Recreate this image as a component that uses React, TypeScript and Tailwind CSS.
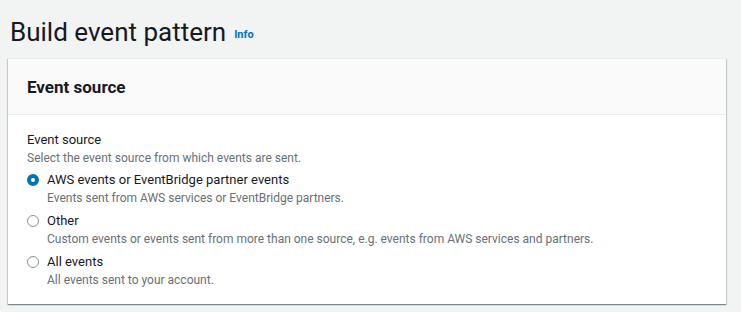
import React from 'react';

const options = [
  {
    label: 'AWS events or EventBridge partner events',
    desc: 'Events sent from AWS services or EventBridge partners.',
    checked: true,
  },
  {
    label: 'Other',
    desc: 'Custom events or events sent from more than one source, e.g. events from AWS services and partners.',
    checked: false,
  },
  {
    label: 'All events',
    desc: 'All events sent to your account.',
    checked: false,
  },
];

const Radio = ({ checked }: { checked: boolean }) =>
  checked ? (
    <span className="mt-[4px] w-[12px] h-[12px] rounded-full border-[4px] border-[#0073bb] bg-white shrink-0" />
  ) : (
    <span className="mt-[4px] w-[12px] h-[12px] rounded-full border border-[#879596] bg-white shrink-0" />
  );

const App = () => {
  return (
    <div
      className="w-[741px] h-[312px] bg-[#f2f3f3] text-[#16191f] pl-[8px] pr-[15px] overflow-hidden"
      style={{ fontFamily: 'Roboto, "Liberation Sans", sans-serif' }}
    >
      <div className="flex items-end gap-[8px] pl-[2px] pt-[8px] h-[50px]">
        <h1 className="text-[26px] leading-[36px] font-normal">Build event pattern</h1>
        <a className="text-[11px] font-bold text-[#0073bb] leading-[14px] mb-[8px]">Info</a>
      </div>
      <div className="mt-[8px] bg-white border-t border-[#eaeded] shadow-[0_1px_1px_0_rgba(0,28,36,0.3),1px_1px_1px_0_rgba(0,28,36,0.15),-1px_1px_1px_0_rgba(0,28,36,0.15)]">
        <div className="bg-[#fafafa] border-b border-[#eaeded] h-[56px] flex items-center px-[19px]">
          <h2 className="text-[17px] font-bold leading-[22px]">Event source</h2>
        </div>
        <div className="px-[19px] pt-[15px] pb-[16px]">
          <div className="text-[13px] leading-[20px]">Event source</div>
          <div className="text-[12px] leading-[16px] text-[#687078]">
            Select the event source from which events are sent.
          </div>
          <div className="flex flex-col gap-[5px] mt-[4px]">
            {options.map((o) => (
              <div key={o.label} className="flex gap-[8px]">
                <Radio checked={o.checked} />
                <div>
                  <div className="text-[13px] leading-[20px]">{o.label}</div>
                  <div className="text-[12px] leading-[16px] text-[#687078]">{o.desc}</div>
                </div>
              </div>
            ))}
          </div>
        </div>
      </div>
    </div>
  );
};

export default App;
